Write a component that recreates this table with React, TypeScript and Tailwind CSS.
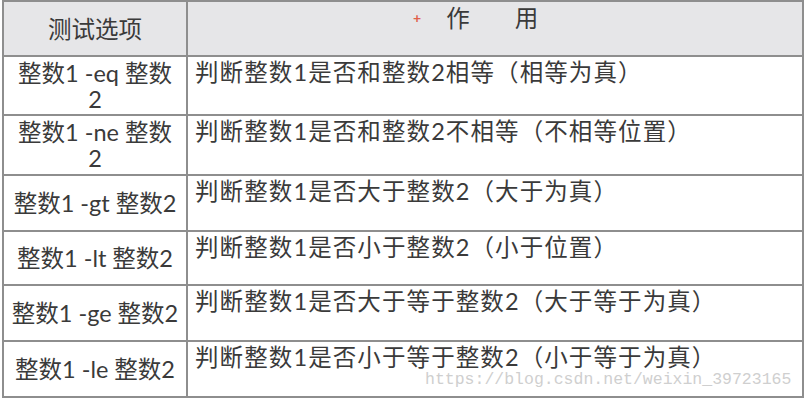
import React from 'react';

const rows: Array<{ opt: string[]; desc: string; h: string }> = [
  { opt: ['整数1 -eq 整数', '2'], desc: '判断整数1是否和整数2相等（相等为真）', h: 'h-[59px]' },
  { opt: ['整数1 -ne 整数', '2'], desc: '判断整数1是否和整数2不相等（不相等位置）', h: 'h-[60px]' },
  { opt: ['整数1 -gt 整数2'], desc: '判断整数1是否大于整数2（大于为真）', h: 'h-[56px]' },
  { opt: ['整数1 -lt 整数2'], desc: '判断整数1是否小于整数2（小于位置）', h: 'h-[54px]' },
  { opt: ['整数1 -ge 整数2'], desc: '判断整数1是否大于等于整数2（大于等于为真）', h: 'h-[56px]' },
  { opt: ['整数1 -le 整数2'], desc: '判断整数1是否小于等于整数2（小于等于为真）', h: 'h-[56px]' },
];

const App: React.FC = () => {
  return (
    <div className="relative w-[806px] h-[398px] bg-white overflow-hidden">
      <table
        className="ml-[2px] w-[802px] border-collapse text-[23.5px] leading-[26px] text-[#3a3a3a]"
        style={{ fontFamily: 'Lato, "Noto Sans CJK SC", sans-serif' }}
      >
        <colgroup>
          <col className="w-[184px]" />
          <col />
        </colgroup>
        <tbody>
          <tr className="h-[55px] bg-[#e6e6e8]">
            <td className="border-2 border-[#8e8e8e] text-center align-middle">测试选项</td>
            <td className="border-2 border-[#8e8e8e] align-top">
              <div className="flex items-center pt-[3px]">
                <span className="ml-[225px] text-[14px] text-[#e0604a] font-bold">+</span>
                <span className="ml-[25px]">作</span>
                <span className="ml-[45px]">用</span>
              </div>
            </td>
          </tr>
          {rows.map((r) => (
            <tr key={r.desc} className={r.h}>
              <td className="border-2 border-[#8e8e8e] text-center align-middle">
                {r.opt.map((l) => (
                  <div key={l}>{l}</div>
                ))}
              </td>
              <td className="border-2 border-[#8e8e8e] align-top pl-[7px] pt-[4px] leading-[22px] tracking-[1.1px]">
                {r.desc}
              </td>
            </tr>
          ))}
        </tbody>
      </table>
      <div
        className="absolute left-[425px] top-[372px] text-[16.5px] leading-none text-[#cfcfcf]"
        style={{ fontFamily: '"Liberation Mono", monospace' }}
      >
        https://blog.csdn.net/weixin_39723165
      </div>
    </div>
  );
};

export default App;
